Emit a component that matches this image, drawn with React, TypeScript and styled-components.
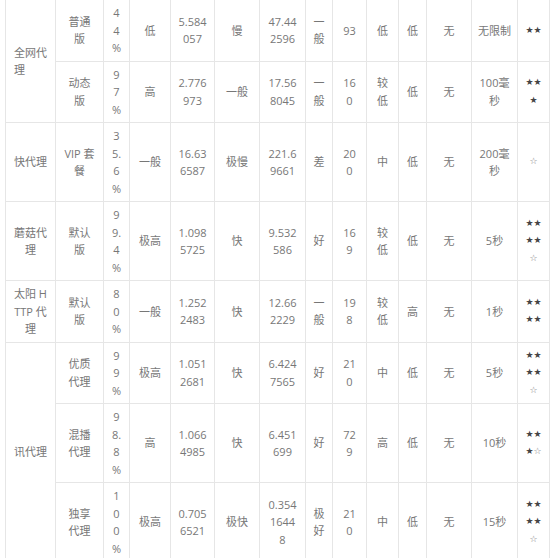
import React from "react";
import styled, { createGlobalStyle } from "styled-components";

const Global = createGlobalStyle`
  html, body { margin: 0; padding: 0; background: #fff; }
  body { font-family: "Open Sans", "Noto Sans CJK SC", sans-serif; }
`;

const Page = styled.div`
  padding: 0 0 0 5px;
  margin-top: -1px;
`;

const Table = styled.table`
  border-collapse: collapse;
  table-layout: fixed;
  width: 545px;
  color: #777;
  font-size: 11px;
  line-height: 17.5px;
`;

const Cell = styled.td<{ $left?: boolean; $stars?: boolean }>`
  border: 1px solid #e6e6e6;
  padding: 4px 0 4px ${(p) => (p.$left ? "8px" : "0")};
  text-align: ${(p) => (p.$left ? "left" : "center")};
  vertical-align: middle;
  white-space: pre;
  overflow: hidden;
  font-family: ${(p) =>
    p.$stars ? '"DejaVu Sans", sans-serif' : '"Open Sans", "Noto Sans CJK SC", sans-serif'};
  font-size: ${(p) => (p.$stars ? "9px" : "11px")};
  color: ${(p) => (p.$stars ? "#444" : "#777")};
`;

const Empty = styled.span`
  color: #7a7a7a;
`;

const widths = [50, 48, 26, 41, 44, 45, 46, 27, 34, 32, 28, 45, 46, 32];

type RowDef = {
  lead?: { text: string; span: number; left?: boolean };
  cells: string[];
};

const rows: RowDef[] = [
  {
    lead: { text: "全网代\n理", span: 2, left: true },
    cells: ["普通\n版", "4\n4\n%", "低", "5.584\n057", "慢", "47.44\n2596", "一\n般", "93", "低", "低", "无", "无限制", "★★"],
  },
  {
    cells: ["动态\n版", "9\n7\n%", "高", "2.776\n973", "一般", "17.56\n8045", "一\n般", "16\n0", "较\n低", "低", "无", "100毫\n秒", "★★\n★"],
  },
  {
    lead: { text: "快代理", span: 1 },
    cells: ["VIP 套\n餐", "3\n5.\n6\n%", "一般", "16.63\n6587", "极慢", "221.6\n9661", "差", "20\n0", "中", "低", "无", "200毫\n秒", "☆"],
  },
  {
    lead: { text: "蘑菇代\n理", span: 1 },
    cells: ["默认\n版", "9\n9.\n4\n%", "极高", "1.098\n5725", "快", "9.532\n586", "好", "16\n9", "较\n低", "低", "无", "5秒", "★★\n★★\n☆"],
  },
  {
    lead: { text: "太阳 H\nTTP 代\n理", span: 1 },
    cells: ["默认\n版", "8\n0\n%", "一般", "1.252\n2483", "快", "12.66\n2229", "一\n般", "19\n8", "较\n低", "高", "无", "1秒", "★★\n★★"],
  },
  {
    lead: { text: "讯代理", span: 3 },
    cells: ["优质\n代理", "9\n9\n%", "极高", "1.051\n2681", "快", "6.424\n7565", "好", "21\n0", "中", "低", "无", "5秒", "★★\n★★\n☆"],
  },
  {
    cells: ["混播\n代理", "9\n8.\n8\n%", "高", "1.066\n4985", "快", "6.451\n699", "好", "72\n9", "高", "低", "无", "10秒", "★★\n★☆"],
  },
  {
    cells: ["独享\n代理", "1\n0\n0\n%", "极高", "0.705\n6521", "极快", "0.354\n1644\n8", "极\n好", "21\n0", "中", "低", "无", "15秒", "★★\n★★\n☆"],
  },
];

function Stars({ text }: { text: string }) {
  return (
    <>
      {text.split("").map((ch, i) =>
        ch === "☆" ? <Empty key={i}>{ch}</Empty> : <React.Fragment key={i}>{ch}</React.Fragment>
      )}
    </>
  );
}

export default function App() {
  return (
    <>
      <Global />
      <Page>
        <Table>
          <colgroup>
            {widths.map((w, i) => (
              <col key={i} style={{ width: w }} />
            ))}
          </colgroup>
          <tbody>
            {rows.map((r, ri) => (
              <tr key={ri}>
                {r.lead && (
                  <Cell rowSpan={r.lead.span} $left={r.lead.left}>
                    {r.lead.text}
                  </Cell>
                )}
                {r.cells.map((c, ci) =>
                  ci === r.cells.length - 1 ? (
                    <Cell key={ci} $stars>
                      <Stars text={c} />
                    </Cell>
                  ) : (
                    <Cell key={ci}>{c}</Cell>
                  )
                )}
              </tr>
            ))}
          </tbody>
        </Table>
      </Page>
    </>
  );
}
